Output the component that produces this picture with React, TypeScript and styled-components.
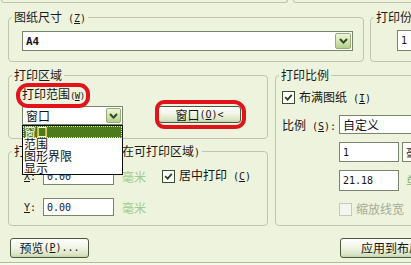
import React from "react";
import styled, { createGlobalStyle } from "styled-components";

const BG = "#eef3dd";
const LINE = "#bcc7ac";
const EDGE = "#76856c";
const CJK = `"Noto Sans CJK SC", "Liberation Sans", sans-serif`;
const MONO = `"DejaVu Sans Mono", "Liberation Mono", monospace`;

const Global = createGlobalStyle`
  html, body { margin: 0; padding: 0; background: ${BG}; overflow: hidden; }
  body { font-family: ${CJK}; font-size: 12px; color: #151515; }
  #root { width: 411px; height: 265px; overflow: hidden; }
`;

const Dialog = styled.div`
  width: 480px;
  height: 265px;
  display: flex;
  flex-direction: column;
`;

const TailRow = styled.div`
  display: flex;
  gap: 5px;
  height: 3px;
  padding-left: 1px;
`;

const Tail = styled.div<{ $w: number }>`
  width: ${(p) => p.$w}px;
  height: 3px;
  box-sizing: border-box;
  border: 1px solid ${LINE};
  border-top: none;
  border-radius: 0 0 3px 3px;
`;

const TopRow = styled.div`
  display: grid;
  grid-template-columns: 356px 120px;
  column-gap: 6px;
  margin: 8px 0 0 8px;
`;

const MainRow = styled.div`
  display: grid;
  grid-template-columns: 260px 200px;
  column-gap: 7px;
  margin: 7px 0 0 8px;
  align-items: start;
`;

const Column = styled.div`
  display: flex;
  flex-direction: column;
  gap: 6px;
`;

const Group = styled.fieldset<{ $h: number }>`
  margin: 0;
  padding: 0;
  min-width: 0;
  box-sizing: border-box;
  height: ${(p) => p.$h}px;
  border: 1px solid ${LINE};
  border-radius: 4px;
`;

const Legend = styled.legend`
  margin-left: 3px;
  padding: 0 2px;
  height: 12px;
  line-height: 12px;
  white-space: nowrap;
  color: #1b1b1b;
`;

const Lat = styled.span<{ $tight?: boolean }>`
  font-family: ${MONO};
  font-size: ${(p) => (p.$tight ? "9px" : "10px")};
  letter-spacing: ${(p) => (p.$tight ? "-0.6px" : "0")};
`;

const Key = styled.span`
  text-decoration: underline;
  text-underline-offset: 1px;
`;

function Mn({ k, tail = "", tight }: { k: string; tail?: string; tight?: boolean }) {
  return (
    <Lat $tight={tight}>
      {tight ? "(" : " ("}
      <Key>{k}</Key>
      {")" + tail}
    </Lat>
  );
}

/* ---------- combo boxes & fields ---------- */

const Combo = styled.div<{ $w: number; $h: number }>`
  box-sizing: border-box;
  width: ${(p) => p.$w}px;
  height: ${(p) => p.$h}px;
  border: 1px solid ${EDGE};
  background: #fff;
  display: flex;
  align-items: stretch;
`;

const ComboText = styled.span<{ $mono?: boolean }>`
  flex: 1;
  display: flex;
  align-items: center;
  padding-left: 3px;
  white-space: nowrap;
  overflow: hidden;
  font-family: ${(p) => (p.$mono ? MONO : CJK)};
  font-size: ${(p) => (p.$mono ? "11px" : "12px")};
  font-weight: ${(p) => (p.$mono ? 600 : 400)};
`;

const DropBtn = styled.span<{ $w: number }>`
  width: ${(p) => p.$w}px;
  margin: 1px;
  box-sizing: border-box;
  border: 1px solid #98ad76;
  border-radius: 2px;
  background: linear-gradient(#eef6dc, #cfe1ad 60%, #b5cd8c);
  display: flex;
  align-items: center;
  justify-content: center;
`;

function Chevron() {
  return (
    <svg width="9" height="6" viewBox="0 0 9 6">
      <path d="M1 1 L4.5 4.6 L8 1" fill="none" stroke="#2e4a22" strokeWidth="2" />
    </svg>
  );
}

const Field = styled.div<{ $w: number; $h: number }>`
  box-sizing: border-box;
  width: ${(p) => p.$w}px;
  height: ${(p) => p.$h}px;
  border: 1px solid ${EDGE};
  background: #fff;
  display: flex;
  align-items: center;
  padding-left: 3px;
  font-family: ${MONO};
  font-size: 10px;
  white-space: nowrap;
  overflow: hidden;
`;

/* ---------- check boxes ---------- */

const CheckLabel = styled.span<{ $off?: boolean }>`
  display: inline-flex;
  align-items: center;
  gap: 4px;
  height: 13px;
  line-height: 12px;
  white-space: nowrap;
  color: ${(p) => (p.$off ? "#a4ac9a" : "#151515")};
`;

const Box = styled.span<{ $off?: boolean }>`
  width: 13px;
  height: 13px;
  box-sizing: border-box;
  border: 1px solid ${(p) => (p.$off ? "#c3ccb6" : "#3b4d2f")};
  background: ${(p) => (p.$off ? "#f3f5ee" : "#fff")};
  display: inline-flex;
  align-items: center;
  justify-content: center;
  flex: none;
`;

function Check({ on, off, children }: { on?: boolean; off?: boolean; children: React.ReactNode }) {
  return (
    <CheckLabel $off={off}>
      <Box $off={off}>
        {on && (
          <svg width="9" height="9" viewBox="0 0 9 9">
            <path d="M1.2 4.2 L3.6 6.6 L7.8 1.8" fill="none" stroke="#2b421f" strokeWidth="1.8" />
          </svg>
        )}
      </Box>
      <span>{children}</span>
    </CheckLabel>
  );
}

/* ---------- buttons ---------- */

const PushButton = styled.button<{ $w: number; $h: number }>`
  width: ${(p) => p.$w}px;
  height: ${(p) => p.$h}px;
  box-sizing: border-box;
  padding: 0;
  margin: 0;
  border: 1px solid #4b5a3c;
  border-radius: 3px;
  background: linear-gradient(#ffffff, #f1f5e6 45%, #dbe5c6 85%, #c6d3ab);
  font-family: ${CJK};
  font-size: 12px;
  line-height: 12px;
  color: #151515;
  white-space: nowrap;
  display: flex;
  align-items: center;
  justify-content: center;
  flex: none;
`;

/* ---------- red annotation rings ---------- */

const Marked = styled.span`
  position: relative;
  display: inline-flex;
`;

const RedRing = styled.span<{ $l: number; $t: number; $w: number; $h: number; $r: string }>`
  position: absolute;
  left: ${(p) => p.$l}px;
  top: ${(p) => p.$t}px;
  width: ${(p) => p.$w}px;
  height: ${(p) => p.$h}px;
  box-sizing: border-box;
  border: 4px solid #e3131b;
  border-radius: ${(p) => p.$r};
  pointer-events: none;
  z-index: 6;
`;

/* ---------- paper size ---------- */

const PaperBody = styled.div`
  padding: 8px 0 0 13px;
`;

const CopiesBody = styled.div`
  padding: 7px 0 0 26px;
`;

/* ---------- plot area ---------- */

const AreaBody = styled.div`
  padding: 7px 0 0 13px;
  display: flex;
  flex-direction: column;
  align-items: flex-start;
  gap: 6px;
`;

const AreaLabel = styled.span`
  line-height: 12px;
  height: 12px;
  white-space: nowrap;
`;

const AreaRow = styled.div`
  display: flex;
  align-items: flex-start;
  gap: 35px;
`;

const ComboWrap = styled.div`
  position: relative;
`;

const DropList = styled.ul`
  position: absolute;
  left: 0;
  top: 100%;
  z-index: 5;
  width: 101px;
  box-sizing: border-box;
  margin: 0;
  padding: 0;
  list-style: none;
  border: 1px solid #0c0c0c;
  background: #fff;
`;

const DropItem = styled.li<{ $sel?: boolean }>`
  height: 12px;
  line-height: 12px;
  padding-left: 1px;
  white-space: nowrap;
  background: ${(p) => (p.$sel ? "#4d7a1c" : "transparent")};
  color: ${(p) => (p.$sel ? "#ffffff" : "#111")};
  outline: ${(p) => (p.$sel ? "1px dotted #d6ecae" : "none")};
  outline-offset: -1px;
`;

/* ---------- plot offset ---------- */

const OffsetBody = styled.div`
  padding: 10px 0 0 15px;
  display: flex;
  flex-direction: column;
  gap: 13px;
`;

const OffsetRow = styled.div`
  display: flex;
  align-items: center;
  height: 18px;
`;

const Axis = styled.span`
  width: 19px;
  font-family: ${MONO};
  font-size: 10px;
`;

const Unit = styled.span`
  width: 24px;
  margin: 0 16px 0 8px;
  color: #9dcc90;
  white-space: nowrap;
`;

/* ---------- plot scale ---------- */

const ScaleBody = styled.div`
  padding: 10px 0 0 6px;
  display: flex;
  flex-direction: column;
  align-items: flex-start;
`;

const ScaleRow = styled.div<{ $mt: number }>`
  margin-top: ${(p) => p.$mt}px;
  display: flex;
  align-items: center;
  gap: 3px;
`;

const ScaleLabel = styled.span`
  width: 54px;
  white-space: nowrap;
`;

const Indent = styled.span`
  width: 54px;
  flex: none;
`;

const GreenText = styled.span`
  color: #7fb46c;
  margin-left: 4px;
  white-space: nowrap;
`;

/* ---------- bottom ---------- */

const BottomBar = styled.div`
  display: flex;
  gap: 251px;
  margin: 12px 0 0 10px;
  height: 20px;
`;

const Footer = styled.div`
  margin-top: 4px;
  height: 3px;
  border-top: 1px solid #a9c18c;
  background: #f6f9ec;
`;

export default function App() {
  return (
    <>
      <Global />
      <Dialog>
        <TailRow>
          <Tail $w={306} />
          <Tail $w={200} />
        </TailRow>

        <TopRow>
          <Group $h={51}>
            <Legend>
              图纸尺寸
              <Mn k="Z" />
            </Legend>
            <PaperBody>
              <Combo $w={331} $h={20}>
                <ComboText $mono>A4</ComboText>
                <DropBtn $w={16}>
                  <Chevron />
                </DropBtn>
              </Combo>
            </PaperBody>
          </Group>
          <Group $h={51}>
            <Legend>
              打印份数
              <Mn k="B" />
            </Legend>
            <CopiesBody>
              <Field $w={60} $h={21}>1</Field>
            </CopiesBody>
          </Group>
        </TopRow>

        <MainRow>
          <Column>
            <Group $h={70}>
              <Legend>打印区域</Legend>
              <AreaBody>
                <Marked>
                  <AreaLabel>
                    打印范围
                    <Mn k="W" tight />
                  </AreaLabel>
                  <RedRing $l={-6} $t={-5} $w={74} $h={25} $r="12px 11px 11px 12px" />
                </Marked>
                <AreaRow>
                  <ComboWrap>
                    <Combo $w={101} $h={19}>
                      <ComboText>窗口</ComboText>
                      <DropBtn $w={15}>
                        <Chevron />
                      </DropBtn>
                    </Combo>
                    <DropList>
                      <DropItem $sel>窗口</DropItem>
                      <DropItem>范围</DropItem>
                      <DropItem>图形界限</DropItem>
                      <DropItem>显示</DropItem>
                    </DropList>
                  </ComboWrap>
                  <Marked>
                    <PushButton $w={83} $h={17}>
                      窗口
                      <Mn k="O" tail="<" />
                    </PushButton>
                    <RedRing $l={-3} $t={-6} $w={91} $h={29} $r="9px 12px 10px 9px" />
                  </Marked>
                </AreaRow>
              </AreaBody>
            </Group>

            <Group $h={81}>
              <Legend>
                打印偏移<Lat>{" ("}</Lat>原点设置在可打印区域<Lat>)</Lat>
              </Legend>
              <OffsetBody>
                <OffsetRow>
                  <Axis>
                    <Key>X</Key>:
                  </Axis>
                  <Field $w={71} $h={18}>0.00</Field>
                  <Unit>毫米</Unit>
                  <Check on>
                    居中打印
                    <Mn k="C" />
                  </Check>
                </OffsetRow>
                <OffsetRow>
                  <Axis>
                    <Key>Y</Key>:
                  </Axis>
                  <Field $w={71} $h={18}>0.00</Field>
                  <Unit>毫米</Unit>
                </OffsetRow>
              </OffsetBody>
            </Group>
          </Column>

          <Group $h={157}>
            <Legend>打印比例</Legend>
            <ScaleBody>
              <ScaleRow $mt={0}>
                <Check on>
                  布满图纸
                  <Mn k="I" />
                </Check>
              </ScaleRow>
              <ScaleRow $mt={11}>
                <ScaleLabel>
                  比例
                  <Mn k="S" tail=":" />
                </ScaleLabel>
                <Combo $w={130} $h={19}>
                  <ComboText>自定义</ComboText>
                </Combo>
              </ScaleRow>
              <ScaleRow $mt={8}>
                <Indent />
                <Field $w={60} $h={20}>1</Field>
                <Combo $w={70} $h={20}>
                  <ComboText>毫米</ComboText>
                </Combo>
              </ScaleRow>
              <ScaleRow $mt={8}>
                <Indent />
                <Field $w={60} $h={21}>21.18</Field>
                <GreenText>单位</GreenText>
              </ScaleRow>
              <ScaleRow $mt={12}>
                <Indent />
                <Check off>
                  缩放线宽
                  <Mn k="L" />
                </Check>
              </ScaleRow>
            </ScaleBody>
          </Group>
        </MainRow>

        <BottomBar>
          <PushButton $w={79} $h={20}>
            预览
            <Mn k="P" tail="..." />
          </PushButton>
          <PushButton $w={120} $h={20}>
            应用到布局
            <Mn k="U" />
          </PushButton>
        </BottomBar>
        <Footer />
      </Dialog>
    </>
  );
}
